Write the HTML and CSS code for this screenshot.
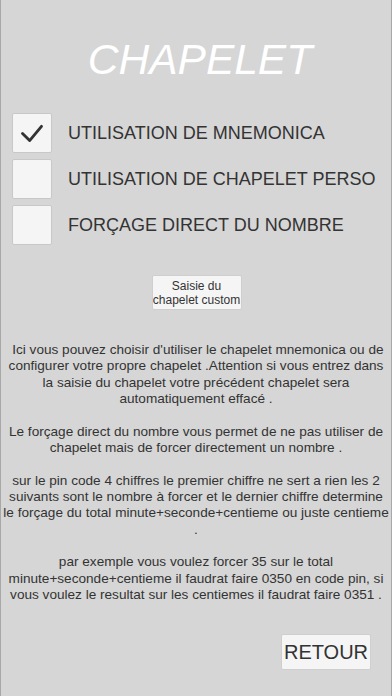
FILE: index.html
```html
<!DOCTYPE html>
<html lang="fr">
<head>
  <meta charset="UTF-8">
  <meta name="viewport" content="width=device-width, initial-scale=1.0">
  <title>Chapelet</title>
  <link rel="stylesheet" href="styles.css">
</head>
<body>
  <div class="screen">
    <h1 class="title">CHAPELET</h1>

    <div class="options">
      <label class="option">
        <span class="box checked">
          <svg viewBox="0 0 40 40" width="40" height="40"><path d="M10 20.5 L17.5 28 L30 13" fill="none" stroke="#333" stroke-width="3" stroke-linecap="round" stroke-linejoin="round"/></svg>
        </span>
        <span class="option-text">UTILISATION DE MNEMONICA</span>
      </label>
      <label class="option">
        <span class="box"></span>
        <span class="option-text">UTILISATION DE CHAPELET PERSO</span>
      </label>
      <label class="option">
        <span class="box"></span>
        <span class="option-text">FORÇAGE DIRECT DU NOMBRE</span>
      </label>
    </div>

    <div class="custom-row">
      <button type="button" class="custom-btn">Saisie du<br>chapelet custom</button>
    </div>

    <div class="info">
      <p>&nbsp;Ici vous pouvez choisir d'utiliser le chapelet mnemonica ou de<br>configurer votre propre chapelet .Attention si vous entrez dans<br>la saisie du chapelet votre précédent chapelet sera<br>automatiquement effacé .</p>
      <p>Le forçage direct du nombre vous permet de ne pas utiliser de<br>chapelet mais de forcer directement un nombre .</p>
      <p>sur le pin code 4 chiffres le premier chiffre ne sert a rien les 2<br>suivants sont le nombre à forcer et le dernier chiffre determine<br>le forçage du total minute+seconde+centieme ou juste centieme<br>.</p>
      <p>par exemple vous voulez forcer 35 sur le total<br>minute+seconde+centieme il faudrat faire 0350 en code pin, si<br>vous voulez le resultat sur les centiemes il faudrat faire 0351 .</p>
    </div>

    <div class="footer">
      <button type="button" class="back-btn">RETOUR</button>
    </div>
  </div>
</body>
</html>
```

FILE: styles.css
```css
html, body {
  margin: 0;
  padding: 0;
}
body {
  font-family: "Liberation Sans", Arial, sans-serif;
  background: #d6d6d6;
  color: #333;
}
.screen {
  width: 390px;
  height: 696px;
  border-left: 1px solid #a8a8a8;
  border-right: 1px solid #a8a8a8;
  background: #d6d6d6;
  display: flex;
  flex-direction: column;
  overflow: hidden;
}
.title {
  margin: 34px 0 0 8px;
  height: 52px;
  font-size: 42.5px;
  font-weight: normal;
  font-style: italic;
  color: #fff;
  text-align: center;
  line-height: 52px;
}
.options {
  margin-top: 27px;
  padding-left: 11px;
  display: flex;
  flex-direction: column;
  gap: 6px;
}
.option {
  display: flex;
  align-items: center;
  height: 40px;
}
.box {
  width: 38px;
  height: 38px;
  background: #f5f5f5;
  border: 1px solid #c8c8c8;
  border-radius: 2px;
  display: flex;
  align-items: center;
  justify-content: center;
}
.box svg {
  display: block;
}
.option-text {
  margin-left: 16px;
  font-size: 18px;
  color: #333;
}
.custom-row {
  margin-top: 30px;
  display: flex;
  justify-content: center;
  padding-left: 1px;
}
.custom-btn {
  width: 90px;
  height: 35px;
  padding: 0;
  background: #f5f5f5;
  border: 1px solid #cfcfcf;
  border-radius: 2px;
  font-family: "Liberation Sans", Arial, sans-serif;
  font-size: 12px;
  line-height: 14px;
  color: #333;
}
.info {
  margin: 32px -4px 0;
  text-align: center;
  white-space: nowrap;
  font-size: 13.6px;
  line-height: 16.33px;
}
.info p {
  margin: 0 0 16.33px;
}
.footer {
  margin-top: auto;
  margin-bottom: 26px;
  display: flex;
  justify-content: flex-end;
  padding-right: 20px;
}
.back-btn {
  width: 90px;
  height: 36px;
  padding: 0;
  background: #f5f5f5;
  border: 1px solid #cfcfcf;
  border-radius: 2px;
  font-family: "Liberation Sans", Arial, sans-serif;
  font-size: 20px;
  color: #333;
}
```
